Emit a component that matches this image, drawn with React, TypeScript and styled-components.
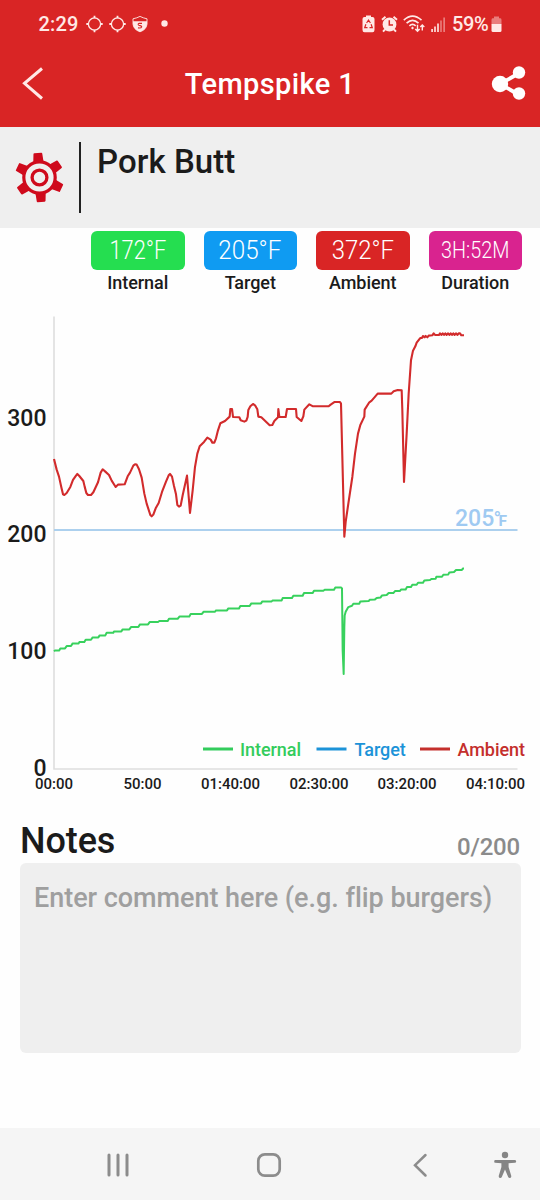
import React from 'react';
import styled, { createGlobalStyle } from 'styled-components';

const GlobalStyle = createGlobalStyle`
  * { box-sizing: border-box; }
  body {
    margin: 0;
    background: #fff;
    color: #1b1b1b;
    font-family: Roboto, "Liberation Sans", sans-serif;
    font-weight: 500;
  }
  svg { display: block; flex: none; }
`;

const Screen = styled.div`
  width: 540px;
  height: 1200px;
  display: flex;
  flex-direction: column;
  background: #fefefe;
`;

const Header = styled.header`
  height: 127px;
  background: #d92525;
  color: #fff;
`;

const StatusBar = styled.div`
  height: 48px;
  padding: 0 38px 0 38.500px;
  display: flex;
  align-items: center;
  justify-content: space-between;
  color: #ffe9e6;
  font-size: 20px;
  line-height: 24px;
`;

const StatusGroup = styled.div<{ $gap: number }>`
  display: flex;
  align-items: center;
  gap: ${(p) => p.$gap}px;
`;

const Clock = styled.span`
  width: 41px;
  letter-spacing: 0.2px;
  white-space: nowrap;
`;

const Percent = styled.span`
  width: 37px;
  letter-spacing: -0.35px;
  margin-left: 1px;
  white-space: nowrap;
`;

const AppBar = styled.div`
  height: 72px;
  padding: 0 14px 0 21px;
  display: grid;
  grid-template-columns: 36px 1fr 36px;
  align-items: center;
`;

const Title = styled.h1`
  margin: 0;
  padding-right: 7px;
  text-align: center;
  font-size: 29px;
  line-height: 36px;
  font-weight: 500;
  letter-spacing: 0.4px;
`;

const SessionPanel = styled.section`
  height: 101px;
  padding: 15px 14px 15px;
  display: flex;
  background: #efefef;
`;

const GearSlot = styled.div`
  width: 65px;
  padding-top: 9px;
`;

const SessionName = styled.h2`
  flex: 1;
  margin: 0;
  height: 71px;
  padding-left: 16px;
  border-left: 2px solid #222;
  font-size: 33px;
  line-height: 39px;
  font-weight: 500;
  letter-spacing: 0.05px;
`;

const Metrics = styled.section`
  height: 72px;
  padding: 3px 18px 0 91px;
  display: grid;
  grid-template-columns: repeat(4, 93.5px);
  justify-content: space-between;
`;

const Metric = styled.div`
  display: flex;
  flex-direction: column;
  align-items: center;
`;

const Readout = styled.div<{ $color: string }>`
  width: 100%;
  height: 38.5px;
  border-radius: 6px;
  display: flex;
  align-items: center;
  justify-content: center;
  background: ${(p) => p.$color};
  color: #fff;
`;

const Digits = styled.span<{ $stretch: number; $size: number }>`
  font-size: ${(p) => p.$size}px;
  line-height: 38px;
  font-weight: 300;
  white-space: nowrap;
  transform: scaleX(${(p) => p.$stretch});
`;

const MetricLabel = styled.span`
  margin-top: 2px;
  font-size: 18px;
  line-height: 22px;
  letter-spacing: -0.05px;
`;

const ChartArea = styled.section`
  height: 510px;
  font-size: 23px;
`;

const NotesSection = styled.section`
  padding: 8px 20px 0 20px;
`;

const NotesHeader = styled.div`
  height: 45px;
  display: flex;
  justify-content: space-between;
  align-items: flex-start;
`;

const NotesTitle = styled.h3`
  margin: 0;
  padding-top: 1px;
  font-size: 36px;
  line-height: 45px;
  font-weight: 500;
  letter-spacing: -0.1px;
`;

const Counter = styled.span`
  padding-top: 14px;
  font-size: 24px;
  line-height: 30px;
  font-weight: 500;
  letter-spacing: -0.2px;
  color: #8b8b8b;
`;

const Comment = styled.textarea`
  display: block;
  width: 501px;
  height: 190px;
  padding: 17px 0 17px 14px;
  border: 0;
  border-radius: 6px;
  resize: none;
  outline: none;
  background: #efefef;
  font: 500 27px/36px Roboto, "Liberation Sans", sans-serif;
  font-variant-ligatures: none;
  letter-spacing: -0.04px;
  color: #1b1b1b;
  overflow: hidden;
  white-space: pre;
  &::placeholder { color: #9f9f9f; opacity: 1; }
`;

const NavBar = styled.nav`
  height: 72px;
  padding: 1px 0 0 105px;
  margin-top: auto;
  display: grid;
  grid-template-columns: 151px 151px 87px 24px;
  align-items: center;
  background: #f5f5f5;
`;

/* ---- traces: vertices at a third of a pixel, read relative to an origin ---- */
const trace = (ox: number, oy: number, pts: string) =>
  pts
    .trim()
    .split(/\s+/)
    .map((p) => {
      const [x, y] = p.split(',').map(Number);
      return `${(ox + x / 3).toFixed(2)},${(oy + y / 3).toFixed(2)}`;
    })
    .join(' ');

const internalTrace = [
  trace(0, 550.4, `162,303 165,300 178,300 181,294 195,294 200,287 213,287 218,279 236,279 238,275 253,275
    257,268 273,268 278,261 295,261 299,255 316,255 320,247 340,247 342,243 364,243 368,237 388,237 393,230
    415,230 420,222 444,222 449,215 474,215 478,212 503,212 507,205 533,205 539,198 568,198 572,191 605,191
    611,184 645,184 648,180 681,180 685,174 717,174 721,167 749,167 754,159 783,159 787,153 810,153`),
  trace(270, 550.4, `5,153 8,150 35,150 38,143 66,143 70,136 98,136 102,128 128,128 132,121 160,121 164,118
    192,118 196,111 213,111 216,114 218,300 221,371 223,230 224,195 227,184 235,170 246,166 250,160 268,160
    271,153 296,152 299,148 315,147 320,143 332,141 336,135 350,134 356,128 370,128 375,122 390,122 393,117
    407,117 411,110 423,110 427,103 440,103 444,97 459,97 463,90 480,89 484,86 497,85 499,79 516,79 520,73
    535,72 538,66 552,65 558,59 575,59 579,54 582,54`),
].join(' ');

const ambientTrace = [
  trace(0, 310.3, `162,446 170,478 177,499 184,531 189,552 193,554 200,548 211,530 219,509 228,496 232,491
    238,497 250,512 254,529 259,548 264,554 273,554 280,546 294,516 302,487 308,477 316,484 327,494 335,511
    347,530 354,523 374,522 383,498 390,487 400,466 405,462 410,463 417,477 425,502 433,550 440,580 451,614
    455,618 460,613 467,594 476,578 486,545 498,514 506,495 510,491 516,499 522,527 528,552 532,584 537,589
    542,586 548,555 561,496 570,608`),
  trace(180, 310.3, `38,540 45,470 52,430 59,408 72,395 82,382 92,388 97,397 103,397 108,384 114,360 121,339
    135,332 149,319 151,296 156,296 159,320 178,321 182,330 193,334 199,331 203,320 205,299 211,288 219,281
    225,285 232,297 235,319 244,321 269,345 277,344 283,332 294,321 295,296 298,320 317,320 321,296 348,296
    350,320 364,332 370,318 373,298 388,282 399,288 446,288 452,283 464,275 480,275 483,280 493,679`),
  trace(340, 310.3, `17,635 25,580 37,500 45,430 54,370 61,344 73,319 74,298 88,276 95,271 113,250 154,250
    161,243 173,239 185,240 187,300 192,515 200,370 206,250 213,150 219,121 226,108 230,97 240,84 247,82
    249,77 254,81 257,77 262,81 266,76 277,75 281,69 285,74 297,74 300,69 304,74 308,69 312,74 316,69 320,74
    324,69 328,74 332,69 336,74 340,69 344,74 348,69 352,74 356,69 360,69 364,75 372,75`),
].join(' ');

const yTicks = [
  { label: '300', y: 425.5 },
  { label: '200', y: 542 },
  { label: '100', y: 659 },
  { label: '0', y: 775.5 },
];
const xTicks = [
  { label: '00:00', x: 54 },
  { label: '50:00', x: 142.6 },
  { label: '01:40:00', x: 230.5 },
  { label: '02:30:00', x: 319 },
  { label: '03:20:00', x: 407 },
  { label: '04:10:00', x: 495.5 },
];
const legend = [
  { label: 'Internal', color: '#33cc5c', line: 203, text: 240 },
  { label: 'Target', color: '#1c93d8', line: 316.5, text: 354.5 },
  { label: 'Ambient', color: '#c42f2c', line: 420, text: 457.5 },
];

const Chart = () => (
  <svg width="540" height="510" viewBox="0 300 540 510">
    <path d="M54 316.5V769H517.5" fill="none" stroke="#dedede" strokeWidth="1.6" />
    <path d="M54 530H517.5" stroke="#acd0ee" strokeWidth="1.8" />
    {yTicks.map((t) => (
      <text key={t.label} x="46.5" y={t.y} textAnchor="end" fontSize="23" fill="#1b1b1b">{t.label}</text>
    ))}
    {xTicks.map((t) => (
      <text key={t.label} x={t.x} y="789" textAnchor="middle" fontSize="15" fill="#1b1b1b">{t.label}</text>
    ))}
    <text x="455" y="526" fontSize="23" fill="#9fcaf2">205</text>
    <text x="493.5" y="526" fontSize="20" fill="#9fcaf2">°</text>
    <text x="498.5" y="526" fontSize="15.5" fontWeight="700" fill="#9fcaf2">F</text>
    <polyline points={internalTrace} fill="none" stroke="#38d15d" strokeWidth="2" strokeLinejoin="round" />
    <polyline points={ambientTrace} fill="none" stroke="#d22b2c" strokeWidth="2.1" strokeLinejoin="round" />
    {legend.map((l) => (
      <g key={l.label}>
        <path d={`M${l.line} 749H${l.line + 30}`} stroke={l.color} strokeWidth="3" />
        <text x={l.text} y="756" fontSize="18" letterSpacing="-0.05" fill={l.color}>{l.label}</text>
      </g>
    ))}
  </svg>
);

const Crosshair = () => (
  <svg width="17" height="18" viewBox="0 0 17 18" fill="none" stroke="#ffe9e6" strokeWidth="1.3">
    <circle cx="8.5" cy="9" r="6.1" />
    <path strokeWidth="1.8" d="M8.5 .7V3.3M8.5 14.7V17.3M.3 9H2.8M14.2 9H16.7" />
  </svg>
);

const Shield = () => (
  <svg width="16" height="18" viewBox="0 0 16 18">
    <path d="M1 3.8Q5 3 8 1.4Q11 3 15 3.8V9Q14.5 14.5 8 16.8Q1.5 14.5 1 9Z" fill="none" stroke="#ffe9e6" strokeWidth=".9" />
    <path d="M1 6.2H15V9Q14.5 14.5 8 16.8Q1.5 14.5 1 9Z" fill="#ffe9e6" />
    <path d="M10 8.4H7.2Q6 8.5 6.3 9.7Q6.7 10.5 8 10.6Q9.9 10.9 9.6 12.2Q9.3 13.3 6 12.9" fill="none" stroke="#d92525" strokeWidth="1.2" />
  </svg>
);

const NotificationDot = () => (
  <svg width="20" height="18" viewBox="0 0 20 18">
    <circle cx="10.500" cy="8.500" r="3.200" fill="#ffe9e6" />
  </svg>
);

const BatteryCare = () => (
  <svg width="13" height="18" viewBox="0 0 13 18">
    <path d="M4 .5H9V2H10.5Q12.5 2 12.5 4V15Q12.5 17.2 10.5 17.2H2.5Q.5 17.2 .5 15V4Q.5 2 2.5 2H4Z" fill="#ffe9e6" />
    <path d="M4.6 8L6.5 5L8.4 8M9.1 9.3L10.3 12.7H7.5M5.5 12.7H2.7L3.9 9.3" fill="none" stroke="#d92525" strokeWidth="1.2" />
  </svg>
);

const Alarm = () => (
  <svg width="17" height="18" viewBox="0 0 17 18">
    <circle cx="8.5" cy="9.5" r="6.9" fill="#ffe9e6" />
    <path d="M1 4.8L4.5 1.7M12.5 1.7L16 4.8M4 14.5L2 16.7M13 14.5L15 16.7" stroke="#ffe9e6" strokeWidth="1.9" />
    <path d="M8.3 5.3V10H12" fill="none" stroke="#d92525" strokeWidth="1.5" />
  </svg>
);

const Wifi = () => (
  <svg width="22" height="18" viewBox="0 0 22 18" fill="none" stroke="#ffe9e6" strokeWidth="1.6">
    <path d="M.8 5.2Q9.5 -2.8 18.5 5.2M3.6 8.2Q9.5 2.6 15.5 8.2M6.4 10.9Q9.5 8 12.7 10.9" />
    <path d="M9.5 11.6L11 13.1L9.5 14.6L8 13.1Z" fill="#ffe9e6" stroke="none" />
    <path strokeWidth="1.4" d="M14.5 9.8V16.2M12.3 14L14.5 16.3L16.7 14M19.3 15.5V10M17.3 12L19.3 9.9L21.3 12" />
  </svg>
);

const Signal = () => (
  <svg width="15" height="17" viewBox="0 0 15 17" fill="#ffe9e6">
    <path d="M.3 13H1.9V16H.3ZM3.2 10.5H4.8V16H3.2ZM6.2 7.5H7.8V16H6.2Z" />
    <path opacity=".45" d="M9.2 4.5H10.8V16H9.2ZM12.3 1.5H14V16H12.3Z" />
  </svg>
);

const Battery = () => (
  <svg width="11" height="17" viewBox="0 0 11 17">
    <path opacity=".45" d="M3 .6H8V2.3H9.5Q10.5 2.5 10.5 4V8.2H.5V4Q.5 2.5 1.5 2.3H3Z" fill="#ffe9e6" />
    <path d="M.5 8H10.5V14.5Q10.5 16 9 16H2Q.5 16 .5 14.5Z" fill="#ffe9e6" />
  </svg>
);

const Gear = () => (
  <svg width="51" height="54" viewBox="-25.5 -26.5 51 54">
    {[0, 60, 120, 180, 240, 300].map((a) => (
      <path key={a} transform={`rotate(${a - 4})`} d="M-5.2 -15L-4.4 -23.7Q-4.3 -24.5 -3.5 -24.5H3.5Q4.3 -24.5 4.4 -23.7L5.2 -15Z" fill="#cf0a1c" />
    ))}
    <circle r="15.7" fill="#efefef" stroke="#cf0a1c" strokeWidth="3.2" />
    <circle r="7.4" fill="none" stroke="#cf0a1c" strokeWidth="3.3" />
  </svg>
);

const metrics = [
  { label: 'Internal', value: '172°F', color: '#25de50', stretch: 0.84, size: 26 },
  { label: 'Target', value: '205°F', color: '#0f9bf2', stretch: 0.93, size: 26 },
  { label: 'Ambient', value: '372°F', color: '#d92525', stretch: 0.92, size: 26 },
  { label: 'Duration', value: '3H:52M', color: '#d9238f', stretch: 0.81, size: 24.5 },
];

export default function App() {
  return (
    <Screen>
      <GlobalStyle />
      <Header>
        <StatusBar>
          <StatusGroup $gap={6}>
            <Clock>2:29</Clock>
            <Crosshair />
            <Crosshair />
            <Shield />
            <NotificationDot />
          </StatusGroup>
          <StatusGroup $gap={5.5}>
            <BatteryCare />
            <Alarm />
            <Wifi />
            <Signal />
            <StatusGroup $gap={2}>
              <Percent>59%</Percent>
              <Battery />
            </StatusGroup>
          </StatusGroup>
        </StatusBar>
        <AppBar>
          <svg width="24" height="34" viewBox="0 0 24 34">
            <path d="M21 1.5L3.5 16.3L21 31.5" fill="none" stroke="#ffe9e6" strokeWidth="3" />
          </svg>
          <Title>Tempspike 1</Title>
          <svg width="36" height="36" viewBox="0 0 36 36" fill="#fff">
            <path d="M28.5 7.5L10 18L28.5 28.5" fill="none" stroke="#fff" strokeWidth="3.8" />
            <circle cx="10" cy="18" r="8.2" />
            <circle cx="29" cy="6.5" r="6.2" />
            <circle cx="29" cy="27.5" r="6.2" />
          </svg>
        </AppBar>
      </Header>
      <SessionPanel>
        <GearSlot><Gear /></GearSlot>
        <SessionName>Pork Butt</SessionName>
      </SessionPanel>
      <Metrics>
        {metrics.map((m) => (
          <Metric key={m.label}>
            <Readout $color={m.color}>
              <Digits $stretch={m.stretch} $size={m.size}>{m.value}</Digits>
            </Readout>
            <MetricLabel>{m.label}</MetricLabel>
          </Metric>
        ))}
      </Metrics>
      <ChartArea><Chart /></ChartArea>
      <NotesSection>
        <NotesHeader>
          <NotesTitle>Notes</NotesTitle>
          <Counter>0/200</Counter>
        </NotesHeader>
        <Comment placeholder="Enter comment here (e.g. flip burgers)" />
      </NotesSection>
      <NavBar>
        <svg width="26" height="26" viewBox="0 0 26 26">
          <path d="M4 3V23M13 3V23M22 3V23" stroke="#8c8c8c" strokeWidth="3" strokeLinecap="round" />
        </svg>
        <svg width="26" height="26" viewBox="0 0 26 26">
          <rect x="2.300" y="2.300" width="21.400" height="21.400" rx="6.500" fill="none" stroke="#8c8c8c" strokeWidth="2.700" />
        </svg>
        <svg width="26" height="26" viewBox="0 0 26 26">
          <path d="M18.500 3L8 13.200L18.500 23.500" fill="none" stroke="#8c8c8c" strokeWidth="2.500" strokeLinecap="round" />
        </svg>
        <svg width="24" height="28" viewBox="0 0 24 28" fill="#858585">
          <circle cx="11" cy="4" r="3.200" />
          <path transform="translate(-1 0)" d="M2 9H22Q23.200 9.200 23.200 10.400Q23 11.600 22 11.700L15.600 12.200V16L18.300 25Q18.400 26.800 17 27Q15.700 27.200 15.200 26L12 18.500L8.800 26Q8.300 27.200 7 27Q5.600 26.800 5.700 25L8.400 16V12.200L2 11.700Q1.200 11.600 1.200 10.400Q1.200 9.200 2 9Z" />
        </svg>
      </NavBar>
    </Screen>
  );
}
